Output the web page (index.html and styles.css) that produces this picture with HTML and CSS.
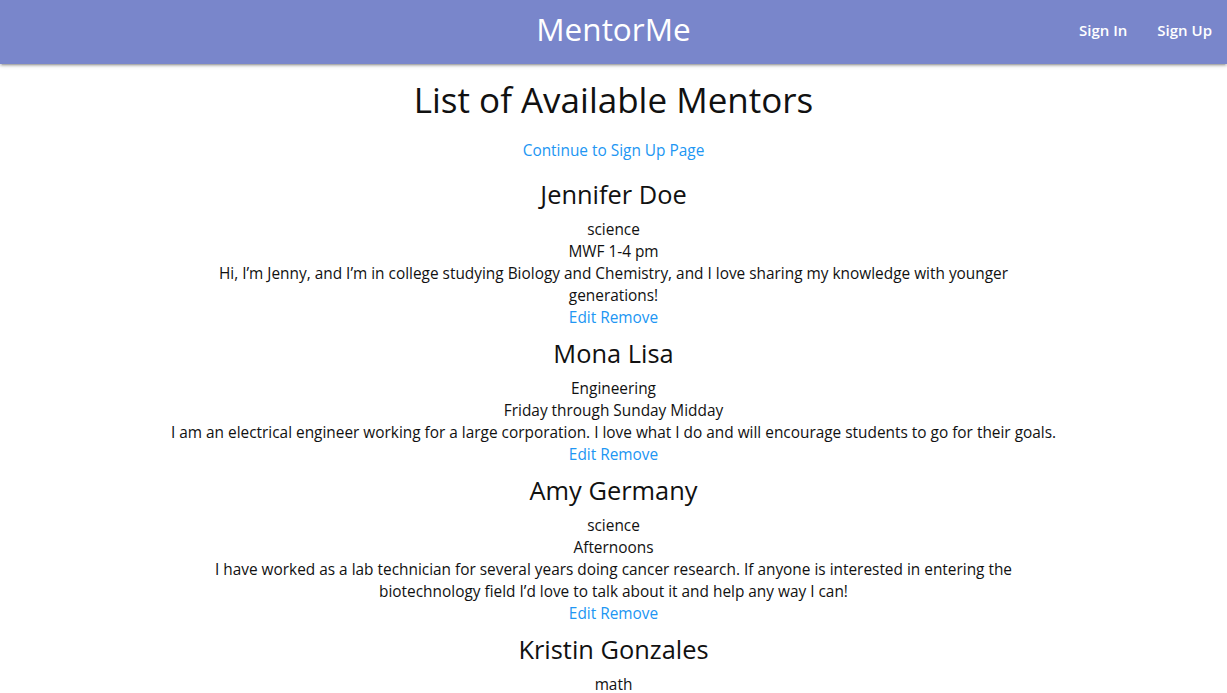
FILE: index.html
```html
<!DOCTYPE html>
<html>
<head>
<meta charset="utf-8">
<title>MentorMe</title>
<link rel="stylesheet" href="styles.css">
</head>
<body>
<nav class="nav">
  <a class="brand" href="#">MentorMe</a>
  <ul class="nav-links">
    <li><a href="#">Sign In</a></li>
    <li><a href="#">Sign Up</a></li>
  </ul>
</nav>
<main class="content">
  <h3 class="title">List of Available Mentors</h3>
  <p class="continue"><a href="#">Continue to Sign Up Page</a></p>
  <div class="mentor">
    <h5 class="name">Jennifer Doe</h5>
    <p class="line">science</p>
    <p class="line">MWF 1-4 pm</p>
    <p class="line bio">Hi, I’m Jenny, and I’m in college studying Biology and Chemistry, and I love sharing my knowledge with younger<br>generations!</p>
    <p class="line"><a href="#">Edit</a> <a href="#">Remove</a></p>
  </div>
  <div class="mentor">
    <h5 class="name">Mona Lisa</h5>
    <p class="line">Engineering</p>
    <p class="line">Friday through Sunday Midday</p>
    <p class="line bio">I am an electrical engineer working for a large corporation. I love what I do and will encourage students to go for their goals.</p>
    <p class="line"><a href="#">Edit</a> <a href="#">Remove</a></p>
  </div>
  <div class="mentor">
    <h5 class="name">Amy Germany</h5>
    <p class="line">science</p>
    <p class="line">Afternoons</p>
    <p class="line bio">I have worked as a lab technician for several years doing cancer research. If anyone is interested in entering the biotechnology field I’d love to talk about it and help any way I can!</p>
    <p class="line"><a href="#">Edit</a> <a href="#">Remove</a></p>
  </div>
  <div class="mentor">
    <h5 class="name">Kristin Gonzales</h5>
    <p class="line">math</p>
  </div>
</main>
</body>
</html>
```
FILE: styles.css
```css
html, body {
  margin: 0;
  padding: 0;
}
body {
  font-family: "Open Sans", "Liberation Sans", sans-serif;
  font-size: 15.4px;
  color: #111;
  background: #fff;
  height: 693px;
  overflow: hidden;
}
a {
  color: #2196f3;
  text-decoration: none;
}
.nav {
  height: 64px;
  background: #7986cb;
  box-shadow: 0 2px 2px 0 rgba(0,0,0,0.14), 0 3px 1px -2px rgba(0,0,0,0.12), 0 1px 5px 0 rgba(0,0,0,0.2);
  display: flex;
  align-items: center;
  justify-content: flex-end;
  position: relative;
}
.brand {
  position: absolute;
  left: 50%;
  top: 0;
  transform: translateX(-50%);
  color: #fff;
  font-size: 31.5px;
  line-height: 58px;
}
.nav-links {
  list-style: none;
  margin: 0 0 4px;
  padding: 0;
  display: flex;
}
.nav-links a {
  display: block;
  padding: 0 15px;
  color: #fff;
  font-size: 15px;
  font-weight: 600;
  line-height: 60px;
}
.content {
  text-align: center;
}
.title {
  font-size: 35px;
  font-weight: 400;
  line-height: 40px;
  margin: 16px 0 19px;
}
.continue {
  margin: 0 0 19px;
  line-height: 22px;
  position: relative;
  top: 1px;
}
.name {
  font-size: 25.4px;
  font-weight: 400;
  line-height: 28px;
  margin: 10px 0 11px;
}
.line {
  margin: 0;
  line-height: 22px;
}
.bio {
  max-width: 892px;
  margin: 0 auto;
}
```
